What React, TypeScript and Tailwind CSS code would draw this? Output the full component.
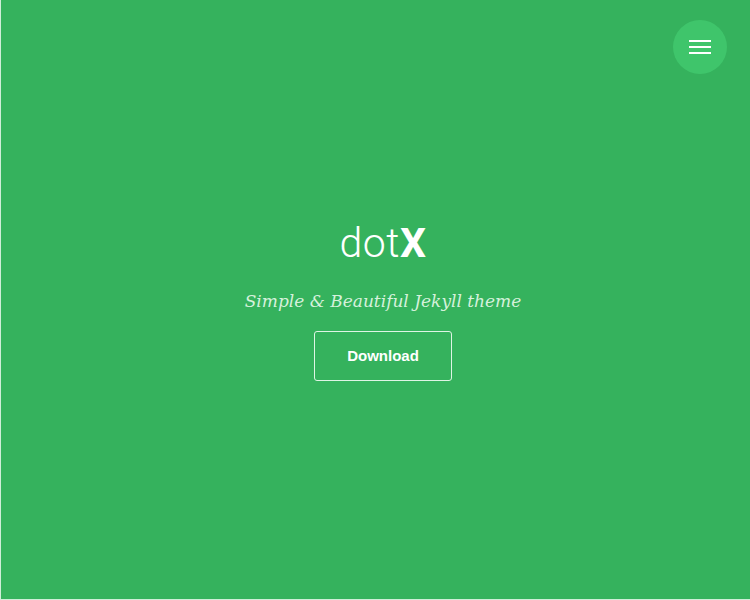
import React from 'react';

export default function App() {
  return (
    <div className="relative h-[600px] w-[750px] overflow-hidden bg-[#35b25d] border-l border-b border-[#cfeed8]">
      {/* Menu toggle */}
      <button className="absolute right-[23px] top-[20px] w-[54px] h-[54px] rounded-full bg-[#3fc56b] flex flex-col items-center justify-center gap-[4px]">
        <span className="block w-[22px] h-[2px] bg-white" />
        <span className="block w-[22px] h-[2px] bg-white" />
        <span className="block w-[22px] h-[2px] bg-white" />
      </button>

      {/* Hero */}
      <div className="h-full flex flex-col items-center justify-center pl-[15px] pt-[5px]">
        <h1 className="text-[41px] leading-none text-white font-['Roboto',sans-serif] tracking-[0.5px]">
          <span className="font-light">dot</span>
          <span className="font-bold">X</span>
        </h1>
        <p className="mt-[25px] text-[17px] italic text-[#d6f1dc] font-['DejaVu_Serif',serif]">
          Simple &amp; Beautiful Jekyll theme
        </p>
        <button className="mt-[17px] w-[138px] h-[50px] rounded-[3px] border border-[#dff5e5] text-white text-[15px] font-bold font-['Liberation_Sans',sans-serif]">
          Download
        </button>
      </div>
    </div>
  );
}
